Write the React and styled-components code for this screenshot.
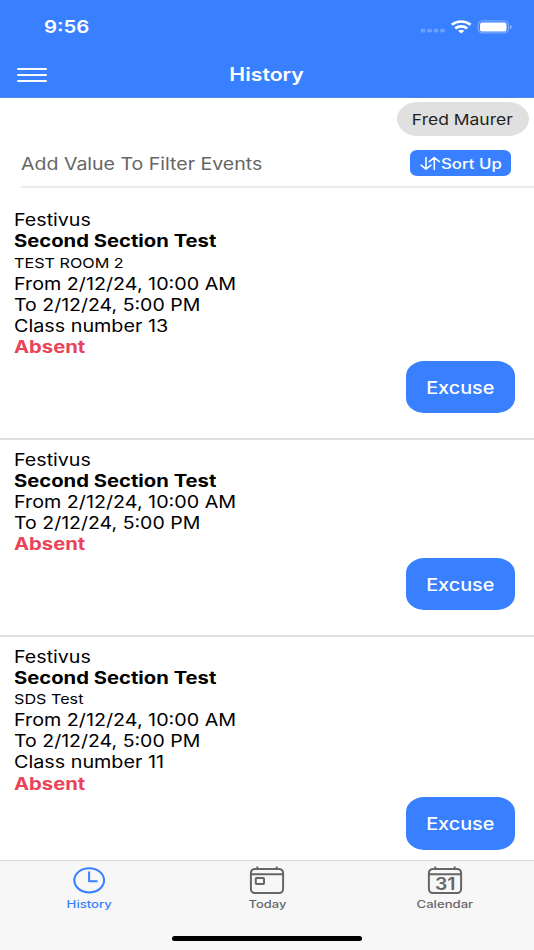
import React from "react";
import styled, { createGlobalStyle } from "styled-components";

const BLUE = "#3880ff";

const GlobalStyle = createGlobalStyle`
  * { box-sizing: border-box; }
  body { margin: 0; background: #fff; font-family: Inter, "Liberation Sans", sans-serif; }
`;

const Screen = styled.div`
  width: 534px;
  height: 950px;
  display: flex;
  flex-direction: column;
  overflow: hidden;
  background: #fff;
  color: #000;
`;

/* Extended-width lettering, anchored left or centred */
const Wide = styled.span`
  display: inline-block;
  white-space: nowrap;
  transform: scaleX(${(p) => p.$stretch || 1.19});
  transform-origin: ${(p) => (p.$center ? "center" : "left")} center;
`;

const Header = styled.header`
  flex: none;
  height: 98px;
  background: ${BLUE};
  color: #fff;
  border-bottom: 1px solid #4a88f0;
`;

const StatusBar = styled.div`
  height: 53px;
  padding: 0 22px 0 44px;
  display: flex;
  align-items: center;
  justify-content: space-between;
  font-size: 17.5px;
  font-weight: 600;
`;

const Toolbar = styled.div`
  height: 44px;
  padding: 0 17px;
  display: grid;
  grid-template-columns: 30px 1fr 30px;
  align-items: center;
`;

const Title = styled.h1`
  margin: 0;
  text-align: center;
  font-size: 18px;
  font-weight: 600;
  line-height: 22px;
`;

const MenuButton = styled.button`
  padding: 0;
  border: 0;
  background: none;
  height: 16px;
  display: flex;
`;

const Content = styled.main`
  flex: 1;
  min-height: 0;
  overflow: hidden;
`;

const ChipRow = styled.div`
  height: 42px;
  padding: 4px 5.5px 0 0;
  display: flex;
  justify-content: flex-end;
`;

const Chip = styled.div`
  width: 132px;
  height: 34px;
  border-radius: 21px / 17px;
  background: #e0e0e0;
  color: #1f1f1f;
  display: flex;
  align-items: center;
  justify-content: center;
  font-size: 15px;
`;

const FilterRow = styled.div`
  height: 48px;
  margin-left: 21px;
  padding: 1px 23px 0 0;
  border-bottom: 2px solid #ebebeb;
  display: flex;
  align-items: center;
  justify-content: space-between;
  font-size: 17px;
  color: #666;
`;

const SortButton = styled.button`
  width: 101px;
  height: 26px;
  margin-bottom: 1px;
  padding: 0 0 0 10px;
  border: 0;
  border-radius: 7px / 6px;
  background: ${BLUE};
  color: #fff;
  font: 500 14px Inter, "Liberation Sans", sans-serif;
  display: flex;
  align-items: center;
  gap: 1px;
`;

const EventList = styled.div`
  padding-top: 12.3px;
`;

const Event = styled.article`
  padding: 10px 19.5px 24.2px 14px;
  border-bottom: 2px solid #e0e0e0;
  display: flex;
  flex-direction: column;
`;

const Line = styled.div`
  height: 21.2px;
  line-height: 21.2px;
  padding-top: ${(p) => (p.$small ? "0.6px" : "0")};
  font-size: ${(p) => (p.$small ? "13.6px" : "17px")};
  font-weight: ${(p) => (p.$bold ? 700 : 400)};
  color: ${(p) => (p.$alert ? "#eb445a" : "#000")};
`;

const ExcuseButton = styled.button`
  align-self: flex-end;
  width: 109px;
  height: 52.3px;
  margin-top: 2.5px;
  padding: 1px 0 0;
  border: 0;
  border-radius: 18px / 15px;
  background: ${BLUE};
  color: #fff;
  font: 500 17px Inter, "Liberation Sans", sans-serif;
`;

const TabBar = styled.nav`
  flex: none;
  height: 90px;
  background: #f7f7f7;
  border-top: 1px solid #d8d8d8;
  display: flex;
  flex-direction: column;
  align-items: center;
`;

const Tabs = styled.div`
  width: 100%;
  height: 75px;
  display: grid;
  grid-template-columns: repeat(3, 1fr);
`;

const Tab = styled.div`
  display: flex;
  flex-direction: column;
  align-items: center;
  padding-top: 4px;
  color: ${(p) => (p.$active ? BLUE : "#666")};
  font-size: 10.6px;
  font-weight: 500;
  line-height: 14px;
  gap: 3px;
`;

const HomeIndicator = styled.div`
  width: 190px;
  height: 5px;
  border-radius: 3px;
  background: #000;
`;

const StatusIcons = () => (
  <svg width="92" height="16" viewBox="420 18.6 92 16" fill="none">
    <g fill="#fff" opacity="0.25">
      <rect x="420.8" y="28.4" width="4.6" height="3.8" rx="1.4" />
      <rect x="427.3" y="28.4" width="4.6" height="3.8" rx="1.4" />
      <rect x="433.8" y="28.4" width="4.6" height="3.8" rx="1.4" />
      <rect x="440.2" y="28.4" width="4.6" height="3.8" rx="1.4" />
    </g>
    <g stroke="#fff" strokeWidth="2.7">
      <path d="M451.8 24.3C457 20 465.4 20 470.6 24.3" />
      <path d="M455.2 28C458.6 25.3 463.8 25.3 467.2 28" />
    </g>
    <path d="M458 30.3Q461.2 28.2 464.4 30.3L461.2 33Z" fill="#fff" />
    <rect x="478.2" y="20.5" width="30.2" height="12" rx="3.8" stroke="#fff" strokeOpacity="0.4" />
    <rect x="480" y="22" width="26.5" height="9.2" rx="2.2" fill="#fff" />
    <path d="M510 24.5Q511.8 25.2 511.8 26.5T510 28.5Z" fill="#fff" fillOpacity="0.45" />
  </svg>
);

const MenuIcon = () => (
  <svg width="30" height="16" viewBox="0 0 30 16" stroke="#fff" strokeWidth="2" strokeLinecap="round">
    <path d="M1 1.9H29M1 8H29M1 14H29" />
  </svg>
);

const SortIcon = () => (
  <svg width="20" height="15" viewBox="0 0 20 15" fill="none" stroke="#fff" strokeWidth="1.5" strokeLinecap="round" strokeLinejoin="round">
    <path d="M6 1.5V13.2M1 9.2L6 13.2L11 9.2M14.3 13.5V1.6M9.3 5.7L14.3 1.6L19.3 5.7" />
  </svg>
);

const ClockIcon = () => (
  <svg width="36" height="30" viewBox="0 0 36 30" fill="none" stroke="currentColor" strokeWidth="2" strokeLinecap="round" strokeLinejoin="round">
    <ellipse cx="18.2" cy="15.3" rx="14.9" ry="12.1" />
    <path d="M18.1 7.2V16.3H25.8" />
  </svg>
);

const CalendarFrame = ({ children }) => (
  <svg width="36" height="30" viewBox="0 0 36 30" fill="none" stroke="currentColor" strokeWidth="2" strokeLinecap="round" strokeLinejoin="round">
    <rect x="1.9" y="3.9" width="32.2" height="24.2" rx="4" />
    <path d="M2 9.2H34" />
    <path d="M8.3 2.3V4M27.7 2.3V4" />
    {children}
  </svg>
);

const Label = styled.text`
  font: 600 17px Inter, "Liberation Sans", sans-serif;
  fill: currentColor;
  stroke: none;
`;

const TodayIcon = () => (
  <CalendarFrame>
    <rect x="6.8" y="12.9" width="8.2" height="6.2" rx="0.8" />
  </CalendarFrame>
);

const MonthIcon = () => (
  <CalendarFrame>
    <Label x="8" y="24.8" textLength="20.5" lengthAdjust="spacingAndGlyphs">31</Label>
  </CalendarFrame>
);

const events = [
  { id: 1, room: "TEST ROOM 2", number: 13 },
  { id: 2 },
  { id: 3, room: "SDS Test", number: 11 },
];

const EventCard = ({ room, number }) => (
  <Event>
    <Line><Wide $stretch={1.155}>Festivus</Wide></Line>
    <Line $bold><Wide>Second Section Test</Wide></Line>
    {room && <Line $small><Wide>{room}</Wide></Line>}
    <Line><Wide $stretch={1.16}>From 2/12/24, 10:00 AM</Wide></Line>
    <Line><Wide $stretch={1.147}>To 2/12/24, 5:00 PM</Wide></Line>
    {number && <Line><Wide $stretch={1.162}>Class number {number}</Wide></Line>}
    <Line $bold $alert><Wide>Absent</Wide></Line>
    <ExcuseButton><Wide $center $stretch={1.165}>Excuse</Wide></ExcuseButton>
  </Event>
);

export default function App() {
  return (
    <Screen>
      <GlobalStyle />
      <Header>
        <StatusBar>
          <Wide $stretch={1.165}>9:56</Wide>
          <StatusIcons />
        </StatusBar>
        <Toolbar>
          <MenuButton aria-label="Menu"><MenuIcon /></MenuButton>
          <Title><Wide $center $stretch={1.18}>History</Wide></Title>
        </Toolbar>
      </Header>
      <Content>
        <ChipRow>
          <Chip><Wide $center $stretch={1.165}>Fred Maurer</Wide></Chip>
        </ChipRow>
        <FilterRow>
          <Wide $stretch={1.149}>Add Value To Filter Events</Wide>
          <SortButton><SortIcon /><Wide $stretch={1.2}>Sort Up</Wide></SortButton>
        </FilterRow>
        <EventList>
          {events.map((e) => <EventCard key={e.id} {...e} />)}
        </EventList>
      </Content>
      <TabBar>
        <Tabs>
          <Tab $active><ClockIcon /><Wide $center $stretch={1.24}>History</Wide></Tab>
          <Tab><TodayIcon /><Wide $center $stretch={1.22}>Today</Wide></Tab>
          <Tab><MonthIcon /><Wide $center $stretch={1.24}>Calendar</Wide></Tab>
        </Tabs>
        <HomeIndicator />
      </TabBar>
    </Screen>
  );
}
